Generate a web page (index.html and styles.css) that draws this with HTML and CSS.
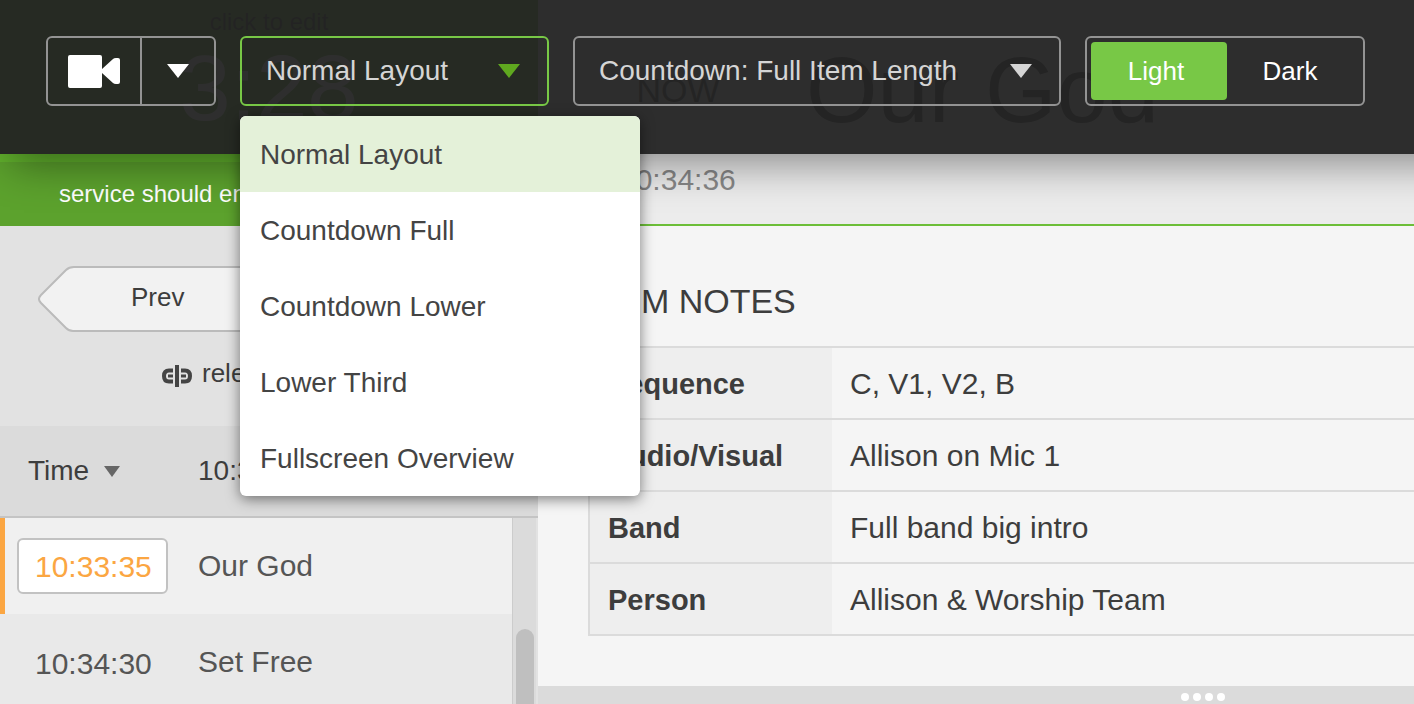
FILE: index.html
```
<!DOCTYPE html>
<html lang="en">
<head>
    <meta charset="UTF-8">
    <meta name="viewport" content="width=device-width, initial-scale=1.0">
    <title>Services Live</title>
    <link rel="stylesheet" href="styles.css">
</head>
<body>
    <div class="page">
        <aside class="sidebar">
            <div class="clock">
                <div class="clock-hint">click to edit</div>
                <div class="clock-time">3:28</div>
            </div>
            <div class="service-end">service should end</div>

            <div class="controls">
                <div class="nav-buttons">
                    <button class="nav-button" type="button">
                        <svg class="nav-arrow" viewBox="0 0 40 66" width="40" height="66">
                            <path d="M40 1H36Q31 1 28 4L3 29Q-1 33 3 37L28 62Q31 65 35 65H40" fill="#f2f2f2" stroke="#bbb" stroke-width="2"/>
                        </svg>
                        <span class="nav-label">Prev</span>
                    </button>
                </div>
                <button class="release-button" type="button">
                    <svg viewBox="0 0 30 22" width="30" height="22" fill="none" stroke="#444">
                        <path d="M11 5.500H7Q2 5.500 2 11Q2 16.500 7 16.500H11M19 5.500H23Q28 5.500 28 11Q28 16.500 23 16.500H19" stroke-width="4"/>
                        <path d="M6 11H11M19 11H24" stroke-width="3"/>
                        <path d="M15 0V22" stroke-width="4"/>
                    </svg>
                    release
                </button>
            </div>

            <div class="list-header">
                <button class="time-button" type="button">
                    Time
                    <svg viewBox="0 0 16 11" width="16" height="11"><path d="M0 0H16L8 11Z" fill="#666"/></svg>
                </button>
                <span>10:33</span>
            </div>

            <div class="list">
                <div class="items">
                    <div class="item current">
                        <input class="item-time" type="text" value="10:33:35" aria-label="Start time">
                        <span class="item-title">Our God</span>
                    </div>
                    <div class="item">
                        <span class="item-time">10:34:30</span>
                        <span class="item-title">Set Free</span>
                    </div>
                </div>
                <div class="scroll-track"><div class="scroll-thumb"></div></div>
            </div>
        </aside>

        <main class="main">
            <header class="main-header">
                <div class="now-row">
                    <div class="now">NOW</div>
                    <div class="now-title">Our God</div>
                </div>
                <div class="now-time">10:34:36</div>
            </header>
            <section class="notes">
                <h2>ITEM NOTES</h2>
                <table>
                    <tr><th scope="row">Sequence</th><td>C, V1, V2, B</td></tr>
                    <tr><th scope="row">Audio/Visual</th><td>Allison on Mic 1</td></tr>
                    <tr><th scope="row">Band</th><td>Full band big intro</td></tr>
                    <tr><th scope="row">Person</th><td>Allison &amp; Worship Team</td></tr>
                </table>
            </section>
            <div class="drag-bar"><i></i><i></i><i></i><i></i></div>
        </main>
    </div>

    <div class="toolbar">
        <div class="button-group">
            <button class="camera-button" type="button" aria-label="Camera">
                <svg viewBox="0 0 52 33" width="52" height="33" fill="#fff">
                    <path d="M2 0H32Q34 0 34 2V14L45 4Q46 3 48 3H50Q52 3 52 5V27Q52 29 50 29H48Q46 29 45 28L34 18V31Q34 33 32 33H2Q0 33 0 31V2Q0 0 2 0Z"/>
                </svg>
            </button>
            <button class="camera-menu" type="button" aria-label="Camera options">
                <svg viewBox="0 0 22 14" width="22" height="14"><path d="M0 0H22L11 14Z" fill="#fff"/></svg>
            </button>
        </div>

        <div class="dropdown layout-dropdown open">
            <select aria-label="Layout">
                <option>Normal Layout</option>
                <option>Countdown Full</option>
                <option>Countdown Lower</option>
                <option>Lower Third</option>
                <option>Fullscreen Overview</option>
            </select>
            <svg class="caret" viewBox="0 0 22 14" width="22" height="14"><path d="M0 0H22L11 14Z"/></svg>
            <ul class="menu">
                <li><button class="selected" type="button">Normal Layout</button></li>
                <li><button type="button">Countdown Full</button></li>
                <li><button type="button">Countdown Lower</button></li>
                <li><button type="button">Lower Third</button></li>
                <li><button type="button">Fullscreen Overview</button></li>
            </ul>
        </div>

        <div class="dropdown countdown-dropdown">
            <select aria-label="Countdown">
                <option>Countdown: Full Item Length</option>
            </select>
            <svg class="caret" viewBox="0 0 22 14" width="22" height="14"><path d="M0 0H22L11 14Z"/></svg>
        </div>

        <div class="theme-switch">
            <input type="radio" name="theme" id="light" checked>
            <label for="light">Light</label>
            <input type="radio" name="theme" id="dark">
            <label for="dark">Dark</label>
        </div>
    </div>
</body>
</html>
```
FILE: styles.css
```
:root {
    --green: #78c846;
    --text: #3d3d3d;
    --line: #dbdbdb;
}

* {
    box-sizing: border-box;
}

body {
    margin: 0;
    overflow: hidden;
    color: var(--text);
    font-family: "Liberation Sans", Arial, sans-serif;
    font-size: 30px;
}

button,
input,
select {
    font: inherit;
    color: inherit;
}

button {
    padding: 0;
    border: none;
    background: none;
    cursor: pointer;
}

svg {
    display: block;
    flex: none;
}

.page {
    display: grid;
    grid-template-columns: 538px 1fr;
    height: 100vh;
}

/* sidebar */
.sidebar {
    display: flex;
    flex-direction: column;
    min-height: 0;
    background: #e2e2e2;
}

.clock {
    flex: none;
    height: 162px;
    padding-top: 8px;
    background: #62b32d;
    text-align: center;
}

.clock-hint {
    font-size: 24px;
    line-height: 28px;
    color: #333;
}

.clock-time {
    font-size: 92px;
    line-height: 104px;
    color: #fff;
}

.service-end {
    flex: none;
    height: 64px;
    padding-left: 59px;
    background: #5ca22d;
    color: #fff;
    font-size: 24px;
    line-height: 64px;
}

.controls {
    flex: none;
    height: 200px;
    padding: 40px 38px 0;
}

.nav-button {
    display: flex;
    width: 230px;
    height: 66px;
}

.nav-label {
    flex: 1;
    height: 66px;
    padding-left: 53px;
    border-top: 2px solid #bbb;
    border-bottom: 2px solid #bbb;
    background: #f2f2f2;
    font-size: 26px;
    line-height: 58px;
    text-align: left;
}

.release-button {
    display: flex;
    align-items: flex-start;
    gap: 10px;
    margin: 25px auto 0 124px;
    font-size: 26px;
    line-height: 32px;
}

.release-button svg {
    margin-top: 8px;
}

.list-header {
    display: grid;
    grid-template-columns: 170px 1fr;
    align-items: center;
    flex: none;
    height: 92px;
    padding-left: 28px;
    border-bottom: 2px solid #c4c4c4;
    background: var(--line);
    font-size: 28px;
}

.time-button {
    display: flex;
    align-items: center;
    gap: 15px;
}

.list {
    display: flex;
    flex: 1;
    min-height: 0;
    padding-right: 2px;
    overflow: hidden;
}

.items {
    flex: 1;
    background: #e9e9e9;
}

.item {
    display: grid;
    grid-template-columns: 151px 1fr;
    align-items: center;
    gap: 30px;
    height: 96px;
    padding-left: 12px;
    border-left: 5px solid transparent;
    color: #555;
}

.current {
    border-left-color: #fba642;
    background: #f0f0f0;
}

.item-time {
    width: 151px;
    height: 56px;
    padding: 2px 0 0 16px;
    border: 2px solid transparent;
    border-radius: 6px;
    line-height: 52px;
}

input.item-time {
    border-color: #c2c2c2;
    background: #fff;
    color: #fba642;
}

.scroll-track {
    width: 24px;
    padding: 111px 2px 0 3px;
    border-left: 1px solid #ccc;
    background: var(--line);
}

.scroll-thumb {
    height: 200px;
    border-radius: 9px;
    background: #bfbfbf;
}

/* main area */
.main {
    display: flex;
    flex-direction: column;
    min-width: 0;
    background: #f5f5f5;
}

.main-header {
    flex: none;
    height: 226px;
    padding: 36px 0 0 50px;
    border-bottom: 2px solid #6cbe38;
    background: #ececec;
}

.now-row {
    display: flex;
    align-items: center;
    gap: 38px;
    height: 108px;
}

.now {
    width: 180px;
    height: 81px;
    background: #e6e6e6;
    font-size: 34px;
    line-height: 80px;
    text-align: center;
}

.now-title {
    font-size: 92px;
    line-height: 104px;
}

.now-time {
    padding-left: 31px;
    color: #888;
    line-height: 72px;
}

.notes {
    flex: 1;
    padding-left: 50px;
}

.notes h2 {
    margin: 0;
    padding-top: 52px;
    font-size: 34px;
    font-weight: 400;
    line-height: 46px;
}

.notes table {
    width: 100%;
    margin-top: 22px;
    border-left: 2px solid var(--line);
    border-top: 2px solid var(--line);
    border-spacing: 0;
}

.notes th,
.notes td {
    height: 72px;
    padding: 2px 18px 0;
    border-bottom: 2px solid var(--line);
    text-align: left;
}

.notes th {
    width: 242px;
    background: #eee;
    font-size: 29px;
}

.drag-bar {
    display: flex;
    gap: 4px;
    flex: none;
    height: 18px;
    padding: 7px 0 0 643px;
    background: var(--line);
}

.drag-bar i {
    width: 8px;
    height: 8px;
    border-radius: 50%;
    background: #fff;
}

/* toolbar laid over the page, runs past the right edge so its shadow does too */
.toolbar {
    position: absolute;
    top: 0;
    left: 0;
    right: -60px;
    display: flex;
    gap: 24px;
    padding: 36px 46px 48px;
    background: rgba(35, 35, 35, 0.95);
    box-shadow: 0 20px 40px -10px rgba(0, 0, 0, 0.42);
    color: #d5d5d5;
    font-size: 28px;
}

.button-group,
.dropdown,
.theme-switch {
    display: flex;
    flex: none;
    height: 70px;
    border: 2px solid #939393;
    border-radius: 6px;
}

.camera-button,
.camera-menu {
    display: flex;
    align-items: center;
    justify-content: center;
}

.camera-button {
    width: 94px;
    border-right: 2px solid #939393;
}

.camera-menu {
    width: 72px;
}

.dropdown {
    position: relative;
    align-items: center;
    padding: 0 27px 0 24px;
}

.layout-dropdown {
    width: 309px;
}

.countdown-dropdown {
    width: 488px;
}

.dropdown select {
    flex: 1;
    min-width: 0;
    height: 66px;
    padding: 0 0 2px;
    border: none;
    background: none;
    appearance: none;
    outline: none;
}

.caret {
    fill: #d5d5d5;
    pointer-events: none;
}

.open {
    border-color: var(--green);
}

.open .caret {
    fill: #5fa81f;
}

.menu {
    position: absolute;
    top: 78px;
    left: -2px;
    width: 400px;
    margin: 0;
    padding: 0;
    overflow: hidden;
    border-radius: 6px;
    background: #fff;
    box-shadow: 0 3px 14px rgba(0, 0, 0, 0.5);
    color: #444;
    list-style: none;
}

.menu button {
    display: block;
    width: 100%;
    height: 76px;
    padding: 2px 20px 0;
    text-align: left;
}

.menu .selected {
    background: #e4f1d9;
}

.theme-switch {
    display: grid;
    grid-template-columns: 136px 1fr;
    width: 280px;
    padding: 4px;
    color: #fff;
    font-size: 26px;
}

.theme-switch input {
    position: absolute;
    opacity: 0;
}

.theme-switch label {
    padding-right: 6px;
    border-radius: 4px;
    line-height: 58px;
    text-align: center;
    cursor: pointer;
}

.theme-switch input:checked + label {
    background: var(--green);
}
```
